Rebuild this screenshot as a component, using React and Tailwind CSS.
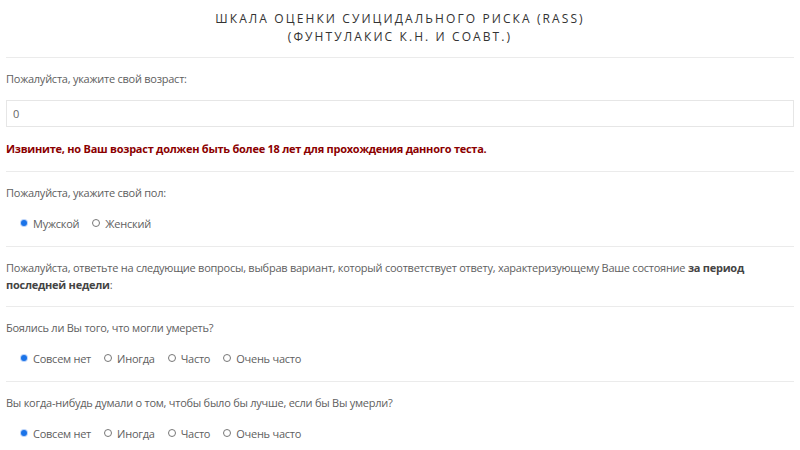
import React, {useState} from 'react'

const Radio = ({checked, label, onClick}) => (
    <label onClick={onClick} className="flex items-center gap-[5px] cursor-pointer">
        {checked ? (
            <span className="w-[8px] h-[8px] rounded-full bg-[#bcd4fa] flex items-center justify-center">
                <span className="w-[6px] h-[6px] rounded-full bg-[#1a73e8]" />
            </span>
        ) : (
            <span className="w-[8px] h-[8px] rounded-full border border-[#777] bg-white" />
        )}
        <span>{label}</span>
    </label>
)

const RadioGroup = ({options}) => {
    const [value, setValue] = useState(0)
    return (
        <div className="flex items-center h-[18px] gap-[13px] pl-[14px]">
            {options.map((o, i) => (
                <Radio key={o} label={o} checked={value === i} onClick={() => setValue(i)} />
            ))}
        </div>
    )
}

const Section = ({children, tight}) => (
    <div className={tight
        ? "border-t border-[#ebebeb] pt-[12px] pb-[13px] flex flex-col gap-[13px]"
        : "border-t border-[#ebebeb] pt-[12px] pb-[14px] flex flex-col gap-[13px]"}>
        {children}
    </div>
)

const answers = ['Совсем нет', 'Иногда', 'Часто', 'Очень часто']

export default function App() {
    const [age, setAge] = useState('0')
    return (
        <div className="w-[800px] h-[450px] overflow-hidden bg-white px-[6px] text-[11px] leading-[17px] tracking-[-0.25px] text-[#606060]" style={{fontFamily: '"Open Sans", "Noto Sans", sans-serif'}}>
            <div className="pt-[10px] pb-[11px] text-center text-[12px] leading-[18px] tracking-[2.1px] uppercase text-[#333]">
                <div>Шкала оценки суицидального риска (RASS)</div>
                <div>(Фунтулакис К.Н. и соавт.)</div>
            </div>

            <Section>
                <div>Пожалуйста, укажите свой возраст:</div>
                <input
                    value={age}
                    onChange={e => setAge(e.target.value)}
                    className="w-full h-[27px] border border-[#e6e6e6] px-[6px] text-[11px] text-[#666] outline-none"
                />
                <div className="font-bold text-[#8b0000]">Извините, но Ваш возраст должен быть более 18 лет для прохождения данного теста.</div>
            </Section>

            <Section>
                <div>Пожалуйста, укажите свой пол:</div>
                <RadioGroup options={['Мужской', 'Женский']} />
            </Section>

            <Section tight>
                <p>
                    Пожалуйста, ответьте на следующие вопросы, выбрав вариант, который соответствует ответу, характеризующему Ваше состояние <span className="font-bold text-[#444]">за период последней недели</span>:
                </p>
            </Section>

            <Section>
                <div>Боялись ли Вы того, что могли умереть?</div>
                <RadioGroup options={answers} />
            </Section>

            <Section>
                <div>Вы когда-нибудь думали о том, чтобы было бы лучше, если бы Вы умерли?</div>
                <RadioGroup options={answers} />
            </Section>
        </div>
    )
}
